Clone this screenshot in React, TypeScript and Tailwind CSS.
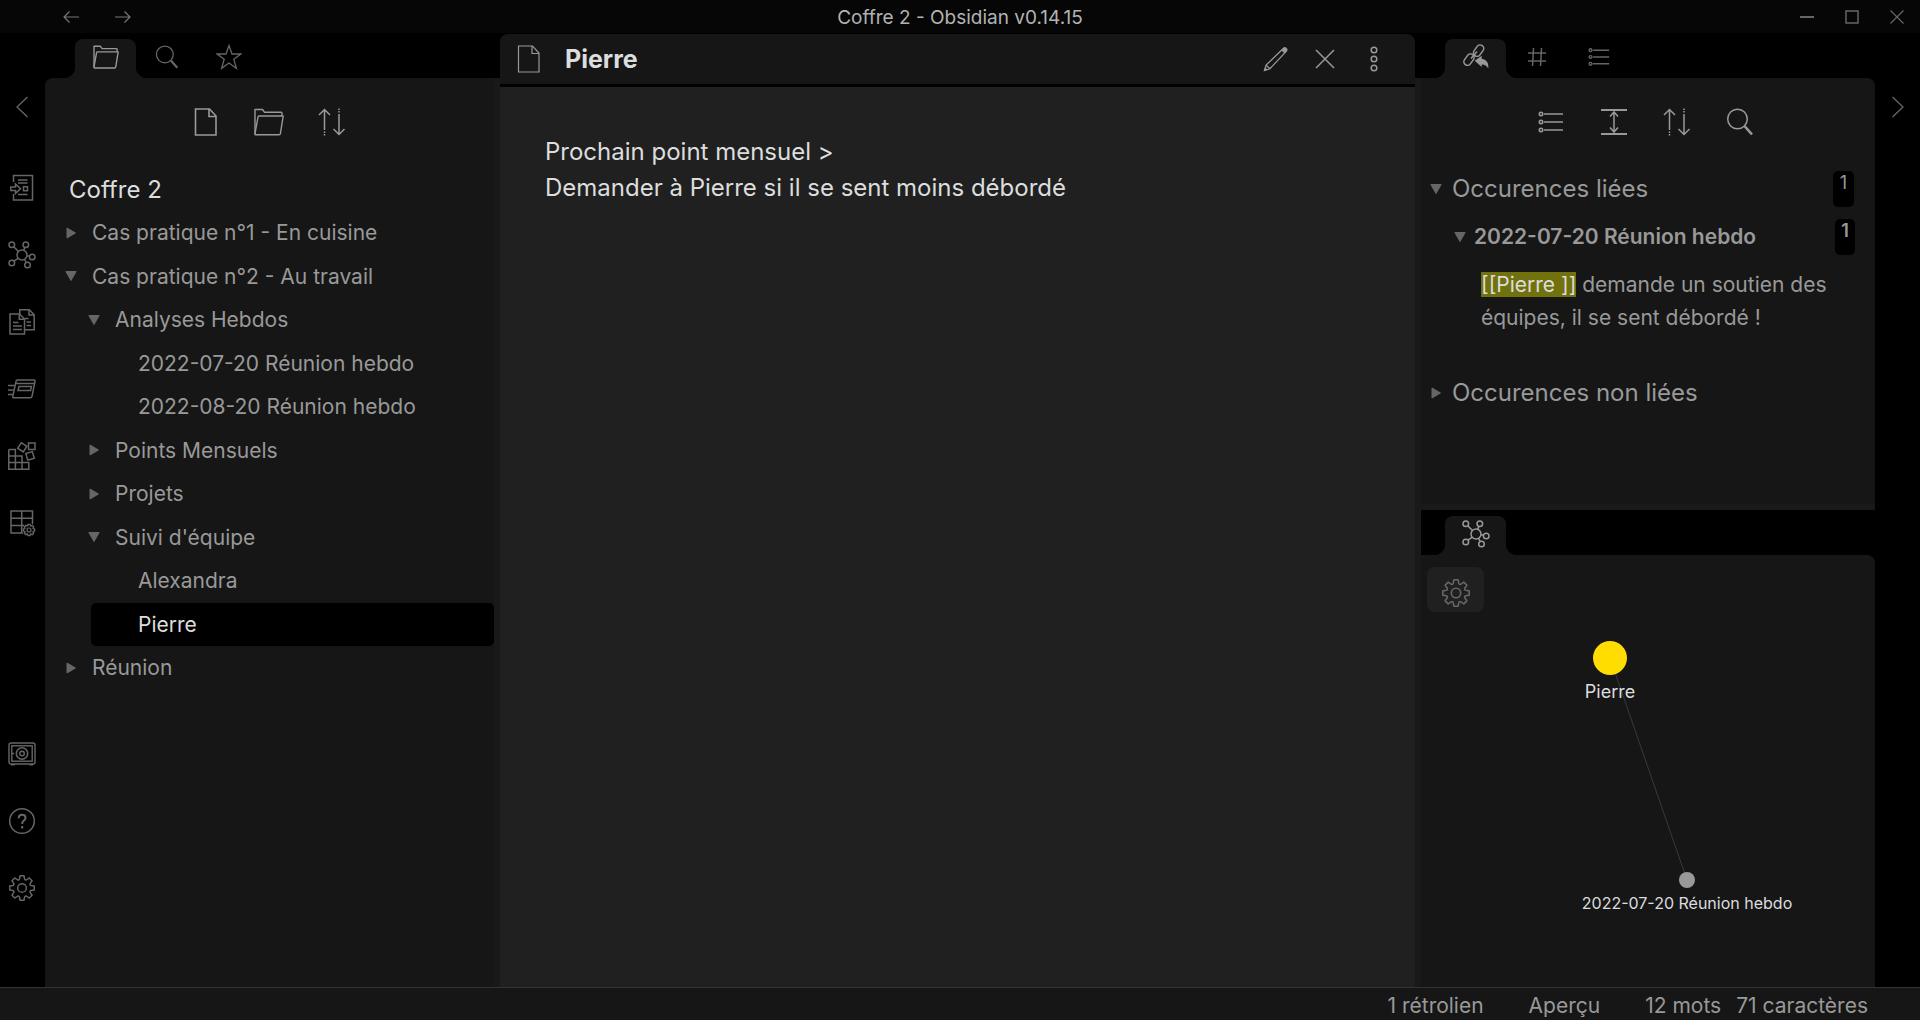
import type { ReactNode } from "react";

type IconProps = { w: number; h: number; children: ReactNode; stroke?: number; className?: string };

function Icon({ w, h, children, stroke = 1.5, className = "" }: IconProps) {
  return (
    <svg
      aria-hidden="true"
      width={w}
      height={h}
      viewBox={`0 0 ${w} ${h}`}
      fill="none"
      stroke="currentColor"
      strokeWidth={stroke}
      className={`shrink-0 ${className}`}
    >
      {children}
    </svg>
  );
}

function gearPath(c: number, outer: number, root: number, half: number) {
  const at = (angle: number, r: number, t: number) => {
    const x = c + r * Math.cos(angle) - t * Math.sin(angle);
    const y = c + r * Math.sin(angle) + t * Math.cos(angle);
    return `${x.toFixed(2)} ${y.toFixed(2)}`;
  };
  let d = "";
  for (let i = 0; i < 8; i++) {
    const a = (i * Math.PI) / 4;
    const next = a + Math.PI / 4;
    d += `${i === 0 ? "M" : "L"}${at(a, root, -half * 1.1)}L${at(a, outer, -half * 0.85)}L${at(a, outer, half * 0.85)}L${at(a, root, half * 1.1)}`;
    d += `Q${at(a + Math.PI / 8, root * 0.9, 0)} ${at(next, root, -half * 1.1)}`;
  }
  return d + "Z";
}

const GearIcon = ({ size }: { size: number }) => (
  <svg aria-hidden="true" width={size} height={size} viewBox="0 0 28 28" fill="none" stroke="currentColor" strokeWidth="1.6" strokeLinejoin="round">
    <path d={gearPath(14, 13.2, 9.8, 2.5)} />
    <circle cx="14" cy="14" r="4.7" />
  </svg>
);

const FolderIcon = ({ small = false }: { small?: boolean }) => (
  <svg aria-hidden="true" width={small ? 26 : 30} height={small ? 24 : 28} viewBox="0 0 30 28" fill="none" stroke="currentColor" strokeWidth={small ? 1.6 : 1.4} strokeLinejoin="round" className="shrink-0">
    <path d="M1 26V1.5h7.5l2 2.8H27c.8 0 1.2.5 1 1.3L27.8 8" />
    <path d="M5 8h24.2l-2.8 17.6c-.1.8-.6 1.2-1.4 1.2H1.8c-.7 0-1-.4-.8-1.2L4 9c.1-.7.4-1 1-1z" />
  </svg>
);

const FileIcon = ({ thin = false }: { thin?: boolean }) => (
  <Icon w={24} h={28} stroke={thin ? 1.2 : 1.6}>
    <path d="M1.500 1h14l6.500 7v19H1.500z" />
    <path d="M15 1v7.500h7" />
  </Icon>
);

const SortIcon = () => (
  <Icon w={28} h={28} stroke={1.5}>
    <path d="M6.500 22V1.500M1 7l5.500-5.500L12 7M21 6v20.500M15.500 21l5.500 5.500 5.500-5.500" />
    <path d="M6.500 23.500v4M21 .5v4" strokeDasharray="1.500 1" />
  </Icon>
);

const SearchIcon = ({ small = false }: { small?: boolean }) => (
  <svg aria-hidden="true" width={small ? 24 : 28} height={small ? 24 : 28} viewBox="0 0 28 28" fill="none" stroke="currentColor" strokeWidth="1.5">
    <circle cx="11.500" cy="11" r="9.800" />
    <path d="M18.500 18l7.500 8.500" strokeWidth="2.600" />
  </svg>
);

const ListIcon = ({ small = false }: { small?: boolean }) => (
  <svg aria-hidden="true" width={small ? 22 : 26} height={small ? 22 : 26} viewBox="0 0 26 26" fill="none" stroke="currentColor" strokeWidth="1.6">
    <path d="M6 5h19M6 13h19M6 21h19" />
    <circle cx="3" cy="5" r="1.700" />
    <circle cx="3" cy="13" r="1.700" />
    <circle cx="3" cy="21" r="1.700" />
  </svg>
);

const GraphIcon = () => (
  <Icon w={28} h={28} stroke={1.5}>
    <circle cx="14" cy="14" r="5" />
    <circle cx="3.800" cy="3.800" r="2.800" />
    <circle cx="17.800" cy="3.700" r="2.800" />
    <circle cx="24.200" cy="16" r="2.800" />
    <circle cx="19.500" cy="24" r="2.800" />
    <circle cx="3.800" cy="22" r="2.800" />
    <path d="M6 6l4.500 4.500M16.900 6.400l-1.200 3M18.900 15h2.500M16.500 18.400l1.700 3M6 20.200l4.300-3" />
  </Icon>
);

const ImportIcon = () => (
  <Icon w={26} h={28}>
    <path d="M4.500 8V1.500h19v24.500h-19v-6" />
    <path d="M9 6h9.500M9 9h9.500M9 20.500h9.500" />
    <rect x="14.500" y="12.700" width="4" height="4" />
    <path d="M1.800 13h4.700v-3l5 4.700-5 4.700v-3H1.800z" />
  </Icon>
);

const CopyIcon = () => (
  <Icon w={28} h={28}>
    <path d="M2 6h9.500l5 5v15H2z" />
    <path d="M11.300 6v5.200h5.200" />
    <path d="M5 14.500h5.500M5 18h9M5 21.500h9" />
    <path d="M11.800 6V1.800h9.500l4.900 4.900v15h-9.500" />
    <path d="M21 1.800V7h5M17 10.500h3.500M18.500 14h4.500M18.500 17.500h4.500" />
  </Icon>
);

const CardIcon = () => (
  <Icon w={28} h={20}>
    <path d="M9.500 1h16.500q1.300 0 1 1.300l-3 15q-.3 1.500-1.700 1.500H6q-1.500 0-1.200-1.400L8 2.300Q8.300 1 9.500 1z" />
    <path d="M7.500 4.500h19M11 7.500h12.500l-1 4H10z" />
    <path d="M0 6.500h6.500M0 11h5.500M0 15.500h4.500" />
  </Icon>
);

const BlocksIcon = () => (
  <Icon w={28} h={28}>
    <path d="M.8 7.500h6.600v19.700M.8 14h13.200v13.200M.8 20.600h20v6.600H.8zM.8 7.500v19.700" />
    <rect x="20.500" y="1" width="6.500" height="6.500" />
    <rect x="11" y="2" width="6.600" height="6.600" transform="rotate(33 14.300 5.300)" />
    <rect x="18.700" y="10.500" width="6.800" height="6.800" transform="rotate(-17 22 14)" />
  </Icon>
);

const TableIcon = () => (
  <Icon w={28} h={28}>
    <path d="M15 24H3V2h21.500v13M3 9.300h21.500M3 16.600h13M13.700 2v22" />
    <path d={gearPath(21, 5.6, 4.5, 1.2)} strokeWidth="1.4" />
    <circle cx="21" cy="21" r="2" strokeWidth="1.2" />
  </Icon>
);

const VaultIcon = () => (
  <Icon w={28} h={24} stroke={1.4}>
    <rect x="1" y="1" width="26" height="21" rx="2" />
    <rect x="3.800" y="3.800" width="20.400" height="15.400" />
    <path d="M3 22.800h3.500M21.500 22.800H25M3.500 11.500H6" />
    <circle cx="14" cy="11.500" r="5.700" strokeWidth="1.6" />
    <circle cx="14" cy="11.500" r="2.300" />
  </Icon>
);

const HelpIcon = () => (
  <Icon w={28} h={28}>
    <circle cx="14" cy="14" r="12.300" />
    <path d="M10.700 11.200c0-2 1.400-3.400 3.400-3.400s3.400 1.300 3.400 3.100c0 2.500-3.300 2.900-3.300 5.500v.6M14.200 19v2.400" strokeWidth="2" />
  </Icon>
);

const BacklinkIcon = () => (
  <Icon w={26} h={26} stroke={1.5}>
    <rect x="-3.600" y="-6.200" width="7.200" height="12.400" rx="3.600" transform="translate(15.600 6.600) rotate(36)" />
    <rect x="-3.600" y="-6.200" width="7.200" height="12.400" rx="3.600" transform="translate(6 15.600) rotate(36)" />
    <path d="M8 14.500l6-7" />
    <path d="M11.700 16.800l7-5v3c4.600.8 7.300 4 6.600 9.700-1.500-2.800-3.400-3.900-6.600-4v2.600z" fill="currentColor" stroke="none" />
  </Icon>
);

const Chevron = ({ open }: { open: boolean }) => (
  <svg aria-hidden="true" width="12" height="12" viewBox="0 0 12 12" className="shrink-0 text-[#666666]">
    <path d={open ? "M.8 1.500h10.400L6 10.500z" : "M2 1v10l8.500-5z"} fill="currentColor" stroke="currentColor" strokeWidth="1" strokeLinejoin="round" />
  </svg>
);

function TabButton({ label, active = false, children }: { label: string; active?: boolean; children: ReactNode }) {
  return (
    <button
      type="button"
      aria-label={label}
      className={
        active
          ? "relative flex h-[39px] w-[61px] items-center justify-center rounded-t-lg bg-[#161616] pb-[3px] text-[#999999] before:absolute before:bottom-0 before:-left-3 before:size-3 before:bg-[radial-gradient(circle_at_0_0,transparent_12px,#161616_13px)] after:absolute after:-right-3 after:bottom-0 after:size-3 after:bg-[radial-gradient(circle_at_100%_0,transparent_12px,#161616_13px)]"
          : "flex h-[39px] w-[62px] items-center justify-center pb-[3px] text-[#666666]"
      }
    >
      {children}
    </button>
  );
}

function IconButton({ label, children }: { label: string; children: ReactNode }) {
  return (
    <button type="button" aria-label={label} className="flex size-7 shrink-0 items-center justify-center">
      {children}
    </button>
  );
}

type Node = { name: string; open?: boolean; children?: Node[]; active?: boolean };

const tree: Node[] = [
  { name: "Cas pratique n°1 - En cuisine", children: [] },
  {
    name: "Cas pratique n°2 - Au travail",
    open: true,
    children: [
      {
        name: "Analyses Hebdos",
        open: true,
        children: [{ name: "2022-07-20 Réunion hebdo" }, { name: "2022-08-20 Réunion hebdo" }],
      },
      { name: "Points Mensuels", children: [] },
      { name: "Projets", children: [] },
      { name: "Suivi d'équipe", open: true, children: [{ name: "Alexandra" }, { name: "Pierre", active: true }] },
    ],
  },
  { name: "Réunion", children: [] },
];

function TreeItems({ nodes }: { nodes: Node[] }) {
  return (
    <>
      {nodes.map((node) => (
        <li key={node.name}>
          <button
            type="button"
            className={
              node.active
                ? "flex w-full items-center rounded-[5px] bg-black py-[6px] text-left leading-normal text-[#dcddde]"
                : "flex w-full items-center py-[6px] text-left leading-normal"
            }
          >
            <span className="flex w-[47px] shrink-0 justify-center pl-1">{node.children && <Chevron open={!!node.open} />}</span>
            {node.name}
          </button>
          {node.open && node.children && (
            <ul className="ml-[23px]">
              <TreeItems nodes={node.children} />
            </ul>
          )}
        </li>
      ))}
    </>
  );
}

export default function App() {
  return (
    <div className="flex h-screen flex-col overflow-hidden bg-black font-['Inter',sans-serif] text-[21px] text-[#999999]">
      <header className="grid h-[33px] shrink-0 grid-cols-[1fr_auto_1fr] items-center bg-[#060606]">
        <div className="flex gap-[24px] pl-[57px] text-[#777777]">
          <IconButton label="Page précédente">
            <Icon w={16} h={12} stroke={1.2}>
              <path d="M16 6H1M6.500.5L1 6l5.500 5.500" />
            </Icon>
          </IconButton>
          <IconButton label="Page suivante">
            <Icon w={16} h={12} stroke={1.2}>
              <path d="M0 6h15M9.500.5L15 6l-5.500 5.500" />
            </Icon>
          </IconButton>
        </div>
        <h1 className="pt-0.5 text-[19px] leading-6 text-[#b3b3b3]">Coffre 2 - Obsidian v0.14.15</h1>
        <div className="flex justify-end gap-[17px] pr-[9px] text-[#666666]">
          <IconButton label="Réduire">
            <Icon w={14} h={14} stroke={2}>
              <path d="M0 7h14" />
            </Icon>
          </IconButton>
          <IconButton label="Agrandir">
            <Icon w={14} h={14}>
              <rect x="1" y="1" width="12" height="12" />
            </Icon>
          </IconButton>
          <IconButton label="Fermer la fenêtre">
            <Icon w={14} h={14} stroke={1.2}>
              <path d="M.5.5l13 13M13.500.5l-13 13" />
            </Icon>
          </IconButton>
        </div>
      </header>

      <div className="flex min-h-0 flex-1">
        <nav aria-label="Ruban" className="flex w-[45px] shrink-0 flex-col items-center bg-black pt-[60px] pr-px text-[#666666]">
          <IconButton label="Replier le panneau gauche">
            <Icon w={14} h={22} stroke={1.3}>
              <path d="M12.500 1L2 11l10.500 10" />
            </Icon>
          </IconButton>
          <div className="mt-[53px] flex flex-col gap-[39px]">
            <IconButton label="Importer"><ImportIcon /></IconButton>
            <IconButton label="Vue graphique"><GraphIcon /></IconButton>
            <IconButton label="Modèles"><CopyIcon /></IconButton>
            <IconButton label="Palette de commandes"><CardIcon /></IconButton>
            <IconButton label="Blocs"><BlocksIcon /></IconButton>
            <IconButton label="Tableau"><TableIcon /></IconButton>
          </div>
          <div className="mt-auto mb-[85px] flex flex-col gap-[39px]">
            <IconButton label="Ouvrir un autre coffre"><VaultIcon /></IconButton>
            <IconButton label="Aide"><HelpIcon /></IconButton>
            <IconButton label="Paramètres"><GearIcon size={26} /></IconButton>
          </div>
        </nav>

        <aside className="flex w-[455px] shrink-0 flex-col">
          <div className="flex h-[45px] shrink-0 items-end pl-[30px]">
            <TabButton label="Fichiers" active><FolderIcon small /></TabButton>
            <TabButton label="Rechercher"><SearchIcon small /></TabButton>
            <TabButton label="Favoris">
              <Icon w={26} h={26} stroke={1.3}>
                <path d="M13 1.500l3 8.500h8.800l-7 5.300 2.600 9L13 19l-7.400 5.300 2.600-9-7-5.300H10z" />
              </Icon>
            </TabButton>
          </div>
          <div className="min-h-0 flex-1 rounded-tl-lg border-r-[6px] border-[#191919] bg-[#161616]">
            <div className="flex h-[88px] items-center justify-center gap-[35px] pr-[2px]">
              <IconButton label="Nouvelle note"><FileIcon /></IconButton>
              <IconButton label="Nouveau dossier"><FolderIcon /></IconButton>
              <IconButton label="Trier"><SortIcon /></IconButton>
            </div>
            <h2 className="mt-2 mb-[5px] pl-6 text-[24px] leading-8 text-[#dcddde]">Coffre 2</h2>
            <ul>
              <TreeItems nodes={tree} />
            </ul>
          </div>
        </aside>

        <main className="mt-px flex min-w-0 flex-1 flex-col">
          <div className="flex h-[53px] shrink-0 items-center rounded-t-lg border-b-[3px] border-black bg-[#161616] pr-[27px] pl-[17px]">
            <FileIcon thin />
            <h2 className="ml-6 flex-1 text-[25px] leading-8 font-bold text-[#dcddde]">Pierre</h2>
            <div className="flex gap-[21px]">
              <IconButton label="Modifier">
                <Icon w={26} h={26} stroke={1.3}>
                  <path d="M1.500 24.500l1.600-5.400L20.500 2.200q1.300-1.200 2.700.2t.2 2.700L6.900 22.800zM18.800 3.800l3.200 3.200M3.100 19.100l3.800 3.700" />
                  <path d="M18.800 3.800l2-1.800q1.300-.9 2.600.4t.4 2.700l-1.800 1.900z" fill="currentColor" stroke="none" />
                  <path d="M1 25l1.200-3.600 2.400 2.400z" fill="currentColor" stroke="none" />
                </Icon>
              </IconButton>
              <IconButton label="Fermer">
                <Icon w={20} h={20} stroke={1.5}>
                  <path d="M1 1l18 18M19 1L1 19" />
                </Icon>
              </IconButton>
              <IconButton label="Plus d'options">
                <Icon w={8} h={26} stroke={1.5}>
                  <circle cx="4" cy="4" r="2.800" />
                  <circle cx="4" cy="13" r="2.800" />
                  <circle cx="4" cy="22" r="2.800" />
                </Icon>
              </IconButton>
            </div>
          </div>
          <article className="min-h-0 flex-1 bg-[#202020] px-[45px] pt-[47px] text-[24px] leading-9 text-[#dcddde]">
            <p>
              Prochain point mensuel &gt;
              <br />
              Demander à Pierre si il se sent moins débordé
            </p>
          </article>
        </main>

        <aside className="flex w-[460px] shrink-0 flex-col">
          <div className="flex h-[45px] shrink-0 items-end pl-[30px]">
            <TabButton label="Rétroliens" active><BacklinkIcon /></TabButton>
            <TabButton label="Étiquettes">
              <Icon w={20} h={20} stroke={1.5}>
                <path d="M6.500 1l-1 18M14.500 1l-1 18M1 6h18M1 14h18" />
              </Icon>
            </TabButton>
            <TabButton label="Plan"><ListIcon small /></TabButton>
          </div>
          <div className="flex min-h-0 flex-1 flex-col border-l-[6px] border-[#191919]">
            <section className="h-[432px] shrink-0 rounded-tr-lg border-b-[6px] border-[#191919] bg-[#161616]">
              <div className="flex h-[88px] items-center justify-center gap-[35px] pr-[5px]">
                <IconButton label="Réduire les résultats"><ListIcon /></IconButton>
                <IconButton label="Afficher plus de contexte">
                  <Icon w={28} h={28} stroke={2}>
                    <path d="M1 2h26M1 26h26" />
                    <path d="M14 4v20M10 8.500L14 4l4 4.500M10 19.500l4 4.500 4-4.500" strokeWidth="1.5" />
                  </Icon>
                </IconButton>
                <IconButton label="Changer l'ordre de tri"><SortIcon /></IconButton>
                <IconButton label="Filtrer"><SearchIcon /></IconButton>
              </div>
              <div className="flex items-center pt-[5px] pr-[21px] pl-[9px]">
                <button type="button" className="flex flex-1 items-center gap-[10px] text-left text-[24px] leading-8">
                  <Chevron open />
                  Occurences liées
                </button>
                <span className="h-9 w-[21px] rounded-[5px] bg-black text-center text-[18px] leading-6">1</span>
              </div>
              <div className="mt-3 flex items-center pr-5 pl-[33px] font-semibold">
                <button type="button" className="flex flex-1 items-center gap-2 text-left leading-8">
                  <Chevron open />
                  2022-07-20 Réunion hebdo
                </button>
                <span className="h-9 w-5 rounded-[5px] bg-black text-center text-[18px] leading-6">1</span>
              </div>
              <p className="mt-[13px] pr-8 pl-[60px] leading-[33px]">
                <mark className="bg-[#71710d] text-[#dcddde]">[[Pierre ]]</mark> demande un soutien des équipes, il se sent débordé !
              </p>
              <button type="button" className="mt-[43px] flex items-center gap-[10px] pl-[9px] text-left text-[24px] leading-8">
                <Chevron open={false} />
                Occurences non liées
              </button>
            </section>
            <div className="flex h-[45px] shrink-0 items-end bg-black pl-6">
              <TabButton label="Vue graphique locale" active><GraphIcon /></TabButton>
            </div>
            <div className="min-h-0 flex-1 bg-black">
              <section className="relative h-full rounded-tr-lg bg-[#161616]">
                <svg role="img" aria-label="Graphique local" className="size-full" fontFamily="Inter, sans-serif" fill="#dcddde" textAnchor="middle">
                  <line x1="189" y1="103" x2="266" y2="325" stroke="#3a3a3a" strokeWidth="1" />
                  <circle cx="189" cy="103" r="17" fill="#ffdd00" />
                  <circle cx="266" cy="325" r="8" fill="#999999" />
                  <text x="189" y="143" fontSize="18">Pierre</text>
                  <text x="266" y="354" fontSize="16">2022-07-20 Réunion hebdo</text>
                </svg>
                <button type="button" aria-label="Ouvrir les réglages du graphique" className="absolute top-3 left-[6px] flex h-[45px] w-[57px] items-center justify-center rounded-lg bg-[#202020] pt-[7px] text-[#666666]">
                  <GearIcon size={28} />
                </button>
              </section>
            </div>
          </div>
        </aside>

        <div className="flex w-[45px] shrink-0 justify-center bg-black pt-[60px] text-[#666666]">
          <IconButton label="Replier le panneau droit">
            <Icon w={14} h={22} stroke={1.3}>
              <path d="M1.500 1L12 11 1.500 21" />
            </Icon>
          </IconButton>
        </div>
      </div>

      <footer className="flex h-[33px] shrink-0 items-center justify-end border-t border-[#333333] bg-[#161616] pt-1 pr-[52px] leading-7">
        <span className="mr-[45px]">1 rétrolien</span>
        <span className="mr-[45px]">Aperçu</span>
        <span className="mr-[15px]">12 mots</span>
        <span>71 caractères</span>
      </footer>
    </div>
  );
}
